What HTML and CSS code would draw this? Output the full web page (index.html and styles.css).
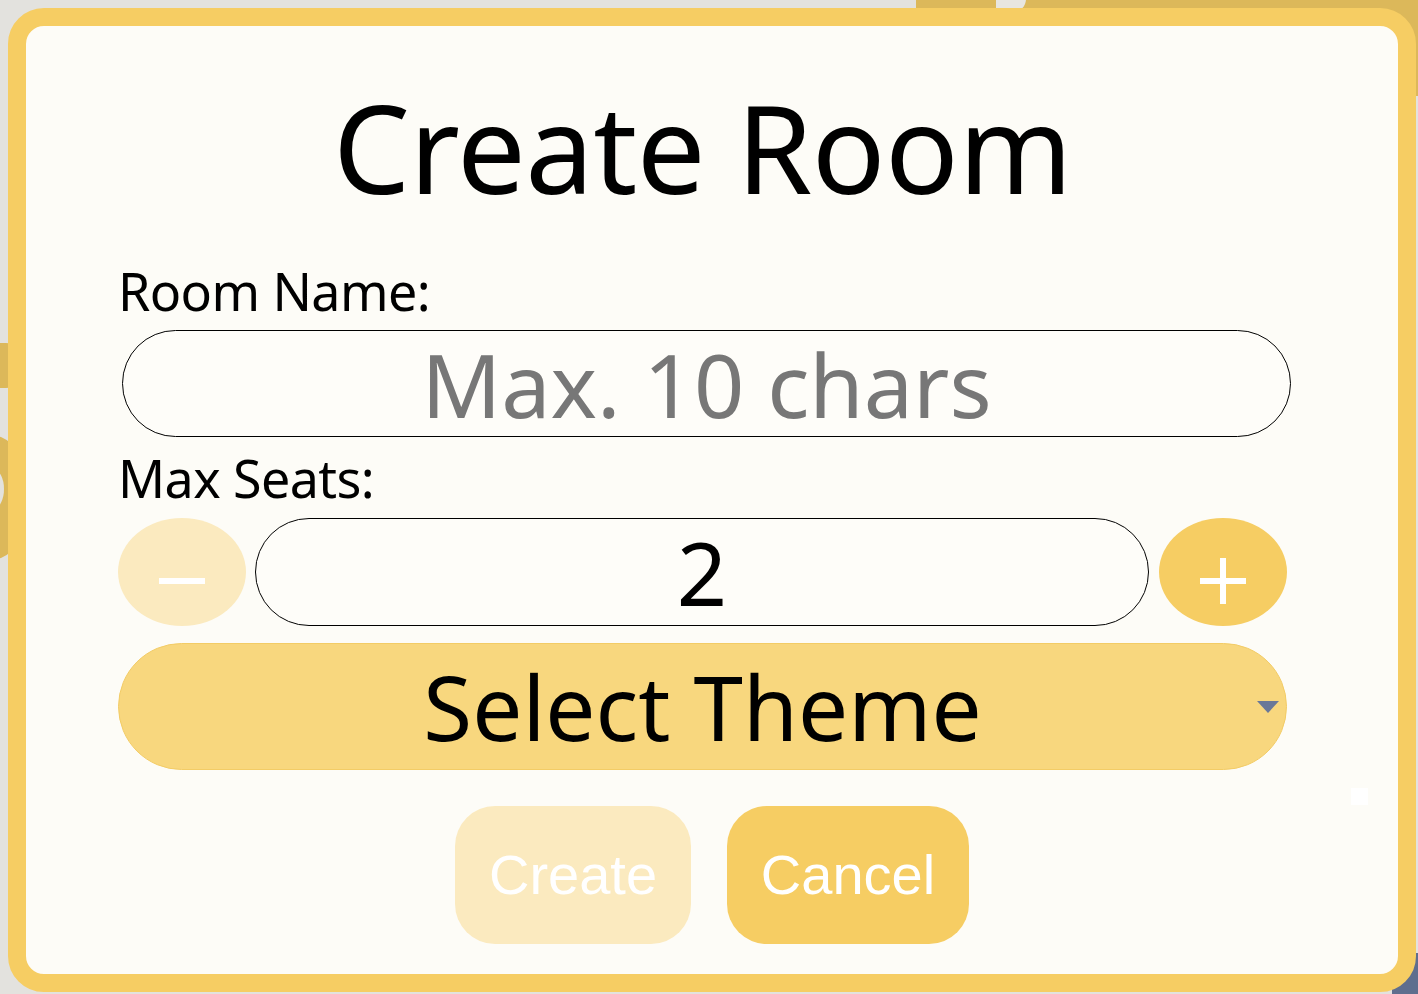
FILE: index.html
```html
<!DOCTYPE html>
<html lang="en">
<head>
<meta charset="utf-8">
<title>Create Room</title>
<link rel="stylesheet" href="styles.css">
</head>
<body>
<div class="backdrop" aria-hidden="true">
  <div class="bg-gold-top"></div>
  <div class="bg-glyph-top"></div>
  <div class="bg-left-a"></div>
  <div class="bg-left-b"><span class="bg-notch"></span></div>
  <div class="bg-blue"></div>
</div>

<div class="modal">
  <div class="form">
    <h1 class="title">Create Room</h1>
    <label class="label" for="room-name">Room Name:</label>
    <input class="name-input" id="room-name" type="text" placeholder="Max. 10 chars">
    <label class="label label-seats" for="seats">Max Seats:</label>
    <div class="seat-row">
      <button class="round-btn round-btn-disabled" type="button" aria-label="decrease">
        <svg width="46" height="46" viewBox="0 0 46 46"><rect x="0" y="20" width="46" height="6" fill="#fff"/></svg>
      </button>
      <input class="seat-input" id="seats" type="text" value="2" readonly>
      <button class="round-btn" type="button" aria-label="increase">
        <svg width="46" height="46" viewBox="0 0 46 46"><rect x="0" y="20" width="46" height="6" fill="#fff"/><rect x="20" y="0" width="6" height="46" fill="#fff"/></svg>
      </button>
    </div>
    <div class="select">
      <span class="select-text">Select Theme</span>
      <svg class="select-arrow" width="22" height="12" viewBox="0 0 22 12"><polygon points="0,0 22,0 11,12" fill="#6a7898"/></svg>
    </div>
  </div>
  <div class="actions">
    <button class="action action-create" type="button">Create</button>
    <button class="action action-cancel" type="button">Cancel</button>
  </div>
  <span class="dot"></span>
</div>
</body>
</html>
```

FILE: styles.css
```css
html, body {
  margin: 0;
  padding: 0;
}

body {
  background: #e3e2de;
  width: 1418px;
  height: 994px;
  overflow: hidden;
  position: relative;
  font-family: "Noto Sans", "Open Sans", sans-serif;
}

/* decorative page behind the dialog */
.backdrop {
  position: absolute;
  inset: 0;
  z-index: 0;
}
.bg-gold-top {
  position: absolute;
  left: 916px;
  top: 0;
  width: 502px;
  height: 96px;
  background: #dcb85a;
}
.bg-glyph-top {
  position: absolute;
  left: 996px;
  top: -14px;
  width: 30px;
  height: 26px;
  border-radius: 0 14px 14px 0;
  background: #e8e6e0;
}
.bg-left-a {
  position: absolute;
  left: -20px;
  top: 343px;
  width: 40px;
  height: 45px;
  background: #dcb85a;
  border-radius: 0 14px 14px 0;
}
.bg-left-b {
  position: absolute;
  left: -20px;
  top: 435px;
  width: 40px;
  height: 125px;
  background: #dcb85a;
  border-radius: 0 30px 30px 0;
}
.bg-notch {
  position: absolute;
  left: 4px;
  top: 35px;
  width: 20px;
  height: 38px;
  border-radius: 50%;
  background: #e3e2de;
}
.bg-blue {
  position: absolute;
  left: 1392px;
  top: 953px;
  width: 26px;
  height: 41px;
  background: #5f6e8e;
}

/* dialog */
.modal {
  position: relative;
  z-index: 1;
  box-sizing: border-box;
  margin: 8px 0 0 8px;
  width: 1408px;
  height: 984px;
  border: 18px solid #f6cd63;
  border-radius: 36px;
  background: #fdfcf7;
  padding-top: 59px;
}

.form {
  margin-left: 92px;
  width: 1169px;
}

.title {
  margin: 0;
  font-size: 122px;
  line-height: 124px;
  font-weight: 400;
  text-align: center;
  color: #000;
  letter-spacing: -0.5px;
}

.label {
  display: block;
  margin: 52px 0 0 0;
  font-size: 52px;
  line-height: 60px;
  color: #000;
  letter-spacing: -0.6px;
}
.label-seats {
  margin-top: 11px;
}

.name-input {
  display: block;
  box-sizing: border-box;
  margin: 9px 0 0 4px;
  width: 1169px;
  height: 107px;
  border: 1px solid #000;
  border-radius: 54px;
  background: #fefdf9;
  padding: 0 40px;
  font-family: "Noto Sans", "Open Sans", sans-serif;
  font-size: 88px;
  line-height: 105px;
  text-align: center;
  color: #000;
  outline: none;
}
.name-input::placeholder {
  color: #777;
  opacity: 1;
}

.seat-row {
  display: flex;
  align-items: center;
  margin-top: 10px;
  height: 108px;
}

.round-btn {
  flex: 0 0 128px;
  height: 108px;
  border: none;
  border-radius: 50%;
  background: #f6cd63;
  padding: 0;
  display: flex;
  align-items: center;
  justify-content: center;
  padding-top: 18px;
  box-sizing: border-box;
}
.round-btn-disabled {
  background: #fbeabf;
}

.seat-input {
  box-sizing: border-box;
  flex: 0 0 894px;
  width: 894px;
  min-width: 0;
  margin: 0 10px 0 9px;
  height: 108px;
  border: 1px solid #000;
  border-radius: 54px;
  background: #fefdf9;
  padding: 0;
  font-family: "Noto Sans", "Open Sans", sans-serif;
  font-size: 88px;
  line-height: 106px;
  text-align: center;
  color: #000;
  outline: none;
}

.select {
  position: relative;
  box-sizing: border-box;
  margin-top: 17px;
  height: 127px;
  border: 1px solid #f3cc66;
  border-radius: 64px;
  background: #f8d77e;
  text-align: center;
}
.select-text {
  font-size: 89px;
  line-height: 125px;
  color: #000;
}
.select-arrow {
  position: absolute;
  right: 7px;
  top: 57px;
}

.actions {
  display: flex;
  justify-content: center;
  gap: 36px;
  margin-top: 36px;
}

.action {
  height: 138px;
  border: none;
  border-radius: 40px;
  padding: 0;
  font-family: "Liberation Sans", Arial, sans-serif;
  font-size: 56px;
  color: #fff;
  line-height: 138px;
}
.action-create {
  width: 236px;
  background: #fbeabf;
}
.action-cancel {
  width: 242px;
  background: #f6cd63;
}

.dot {
  position: absolute;
  left: 1325px;
  top: 762px;
  width: 17px;
  height: 17px;
  background: #fff;
}
```
